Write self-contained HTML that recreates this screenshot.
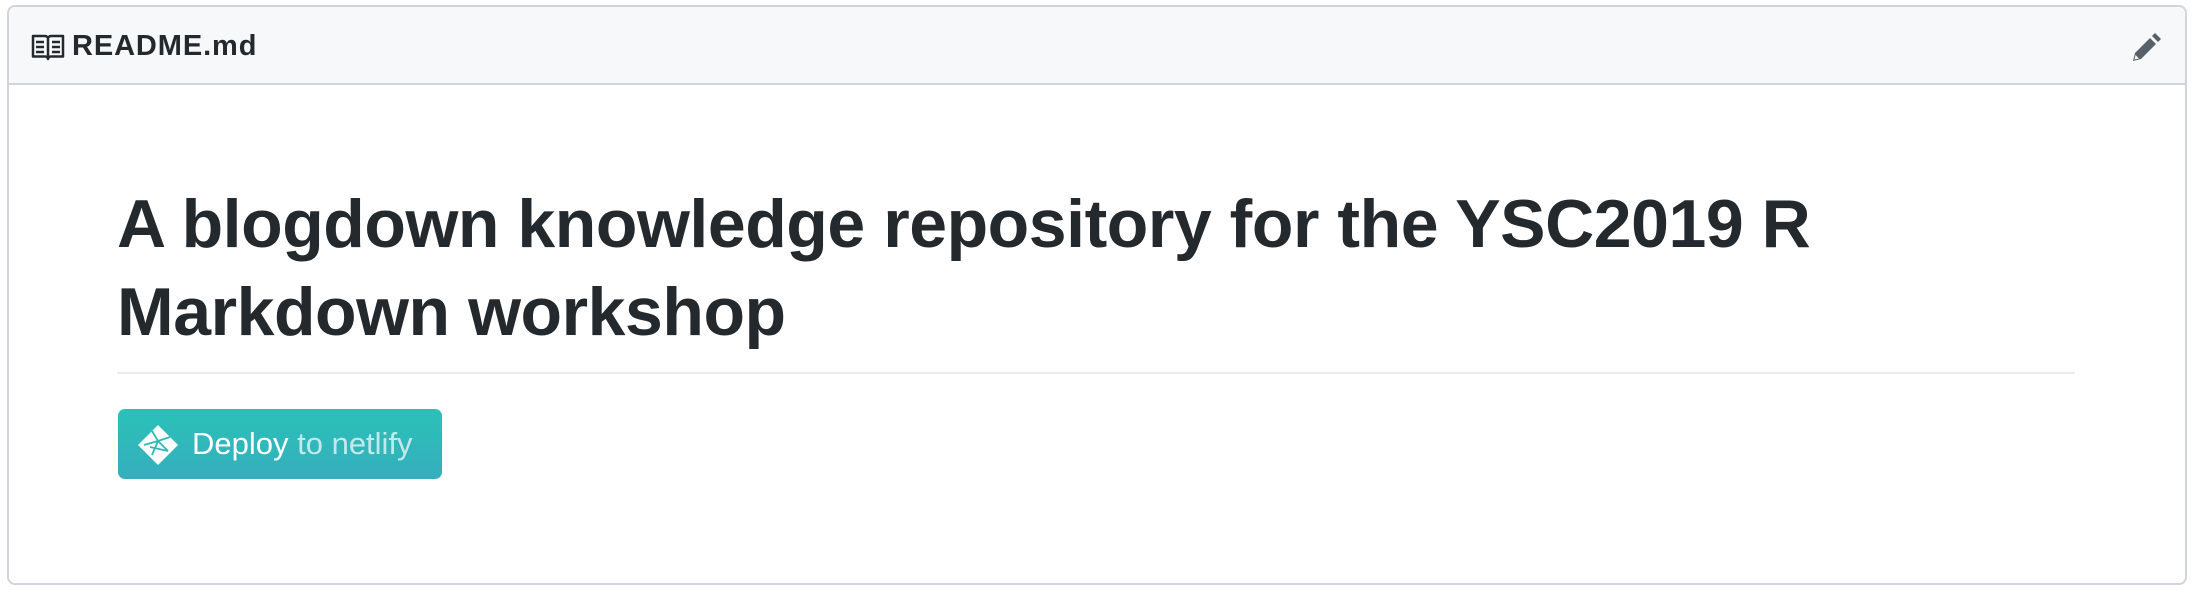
<!DOCTYPE html>
<html><head><meta charset="utf-8"><style>
html,body{margin:0;padding:0;background:#fff;width:2194px;height:592px;overflow:hidden;font-family:"Liberation Sans",sans-serif;color:#24292e}
.box{position:absolute;left:7px;top:5px;width:2176px;height:576px;border:2px solid #d1d5da;border-radius:8px;overflow:hidden}
.hdr{position:absolute;left:0;top:0;right:0;height:76px;background:#f6f8fa;border-bottom:2px solid #d1d5da}
.hdr .t{position:absolute;left:63px;top:22px;font-size:29px;font-weight:bold;line-height:34px;letter-spacing:0.9px}
.book{position:absolute;left:22px;top:26px}
.pen{position:absolute;right:22px;top:24px}
h1{position:absolute;left:108px;top:173px;width:1960px;margin:0;font-size:68px;line-height:88px;font-weight:bold;letter-spacing:-0.45px}
.rule{position:absolute;left:108px;top:365px;width:1958px;height:2px;background:#eaecef}
.btn{position:absolute;left:109px;top:402px;width:324px;height:70px;border-radius:7px;background:linear-gradient(#2bc1b8,#36aebd)}
.btn .tx{position:absolute;left:74px;top:17px;font-size:31px;line-height:36px;color:#fff;white-space:nowrap;font-family:"Liberation Sans",sans-serif}
.btn .tx span{opacity:.7}
.logo{position:absolute;left:20px;top:16px}
</style></head><body>
<div class="box">
 <div class="hdr">
  <svg class="book" width="34" height="28" viewBox="0 0 34 28"><path d="M2 3h12c1.5 0 3 1 3 3v20c0-1.5-1.5-2.5-3-2.5H2z M32 3H20c-1.5 0-3 1-3 3v20c0-1.5 1.5-2.5 3-2.5h12z" fill="none" stroke="#24292e" stroke-width="2.5" stroke-linejoin="round"/><path d="M5 9h8M5 14h8M5 19h8M21 9h8M21 14h8M21 19h8" stroke="#24292e" stroke-width="2.5"/></svg>
  <div class="t">README.md</div>
  <svg class="pen" width="32" height="32" viewBox="0 0 32 32"><path d="M24 2l6 6-3 3-6-6z" fill="#586069"/><path d="M19 7l6 6L10 28l-8 2 2-8z" fill="#586069"/><path d="M4.5 24l3.5 3.5-4.5 1z" fill="#f6f8fa"/></svg>
 </div>
 <h1>A blogdown knowledge repository for the YSC2019 R Markdown workshop</h1>
 <div class="rule"></div>
 <div class="btn">
  <svg class="logo" width="40" height="40" viewBox="0 0 40 40"><path d="M20 0L40 20 20 40 0 20z" fill="#fff"/><path d="M14 6l6 10 12-4M20 16l-6 14M20 16l10 10M6 20l14-4M12 22l18 4" stroke="#30b9b9" stroke-width="1.8" fill="none"/></svg>
  <div class="tx">Deploy <span>to netlify</span></div>
 </div>
</div>
</body></html>
